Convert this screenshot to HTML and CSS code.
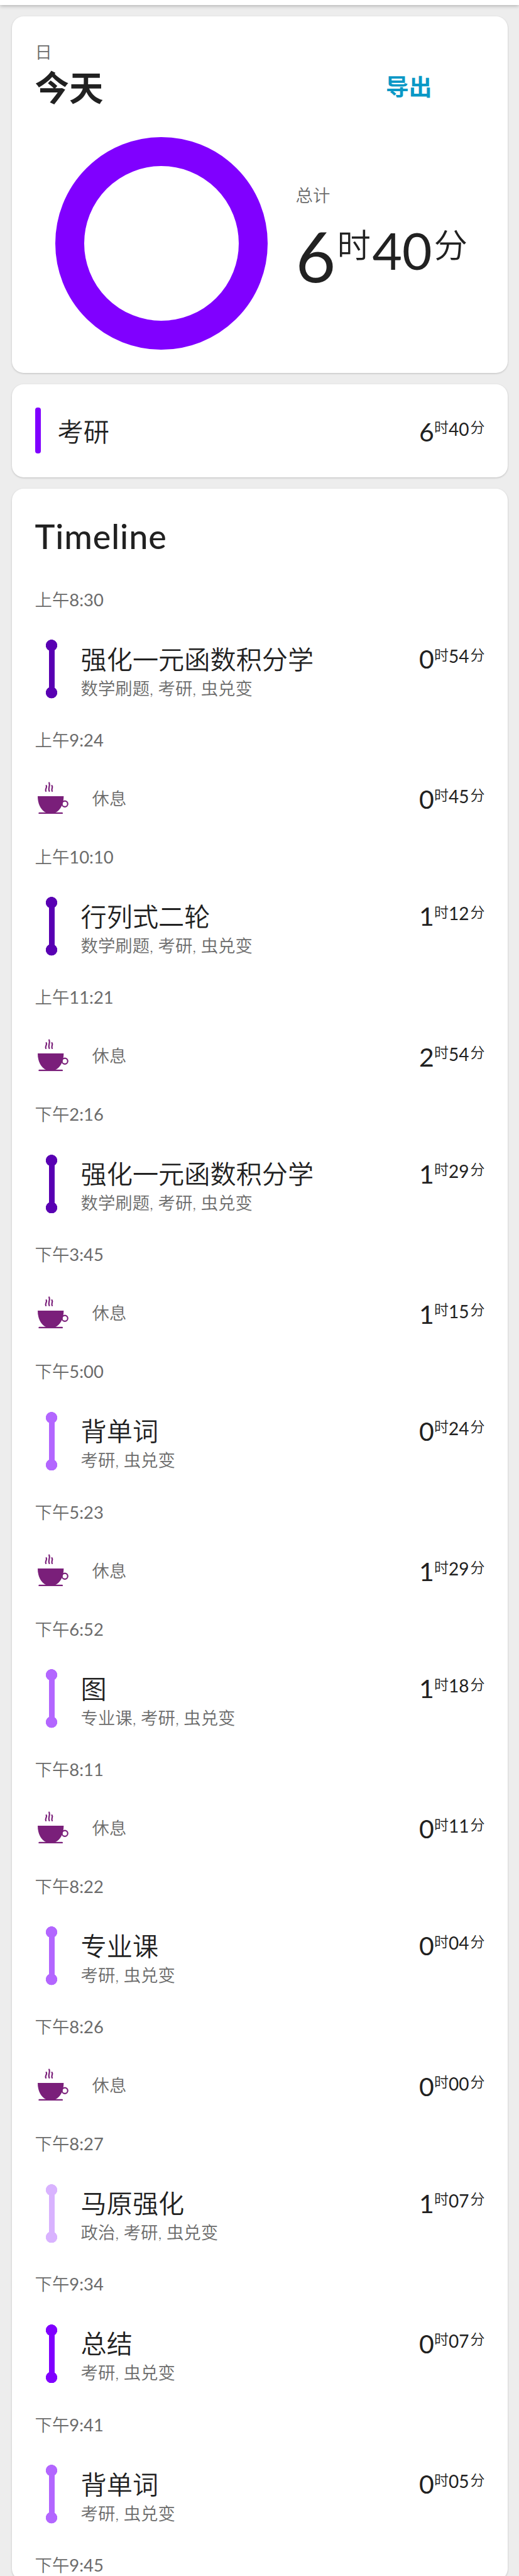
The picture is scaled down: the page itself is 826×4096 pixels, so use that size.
FILE: index.html
```html
<!DOCTYPE html>
<html lang="zh-CN">
<head>
<meta charset="utf-8">
<title>今天</title>
<link rel="stylesheet" href="styles.css">
</head>
<body>
<svg class="defs" width="0" height="0" aria-hidden="true">
  <symbol id="cup" viewBox="0 0 64 67">
    <path d="M0 30H54C54 48 46 60 37 64H17C8 60 0 48 0 30Z" fill="currentColor"/>
    <circle cx="56.4" cy="46" r="6" fill="none" stroke="currentColor" stroke-width="2.8"/>
    <path d="M3.300 65.300H50.700" stroke="currentColor" stroke-width="3.2" stroke-linecap="round"/>
    <path d="M17.800 8C20.500 12 14.500 15 17 19.500M23.800 2C26.500 9 21 12 24 19.500M29.500 8C32.500 12 27.500 15 30 19.500" fill="none" stroke="currentColor" stroke-width="2.900" stroke-linecap="round"/>
  </symbol>
</svg>
<div class="appbar"></div>
<main class="page">
  <section class="card summary">
    <p class="caption">日</p>
    <div class="heading">
      <h1>今天</h1>
      <a class="export">导出</a>
    </div>
    <div class="overview">
      <div class="ring"></div>
      <div class="total">
        <p class="caption">总计</p>
        <div class="duration large"><b>6</b><i>时</i><em>40</em><i>分</i></div>
      </div>
    </div>
  </section>

  <section class="card category">
    <span class="bar"></span>
    <span class="name">考研</span>
    <div class="duration"><b>6</b><i>时</i><em>40</em><i>分</i></div>
  </section>

  <section class="card timeline">
    <h2>Timeline</h2>
    <div class="entry task deep">
      <time>上午8:30</time><span class="rod"></span>
      <div class="info"><h3>强化一元函数积分学</h3><p>数学刷题, 考研, 虫兑变</p></div>
      <div class="duration"><b>0</b><i>时</i><em>54</em><i>分</i></div>
    </div>
    <div class="entry rest">
      <time>上午9:24</time><svg class="cup"><use href="#cup"/></svg><p class="pause">休息</p>
      <div class="duration"><b>0</b><i>时</i><em>45</em><i>分</i></div>
    </div>
    <div class="entry task deep">
      <time>上午10:10</time><span class="rod"></span>
      <div class="info"><h3>行列式二轮</h3><p>数学刷题, 考研, 虫兑变</p></div>
      <div class="duration"><b>1</b><i>时</i><em>12</em><i>分</i></div>
    </div>
    <div class="entry rest">
      <time>上午11:21</time><svg class="cup"><use href="#cup"/></svg><p class="pause">休息</p>
      <div class="duration"><b>2</b><i>时</i><em>54</em><i>分</i></div>
    </div>
    <div class="entry task deep">
      <time>下午2:16</time><span class="rod"></span>
      <div class="info"><h3>强化一元函数积分学</h3><p>数学刷题, 考研, 虫兑变</p></div>
      <div class="duration"><b>1</b><i>时</i><em>29</em><i>分</i></div>
    </div>
    <div class="entry rest">
      <time>下午3:45</time><svg class="cup"><use href="#cup"/></svg><p class="pause">休息</p>
      <div class="duration"><b>1</b><i>时</i><em>15</em><i>分</i></div>
    </div>
    <div class="entry task light">
      <time>下午5:00</time><span class="rod"></span>
      <div class="info"><h3>背单词</h3><p>考研, 虫兑变</p></div>
      <div class="duration"><b>0</b><i>时</i><em>24</em><i>分</i></div>
    </div>
    <div class="entry rest">
      <time>下午5:23</time><svg class="cup"><use href="#cup"/></svg><p class="pause">休息</p>
      <div class="duration"><b>1</b><i>时</i><em>29</em><i>分</i></div>
    </div>
    <div class="entry task light">
      <time>下午6:52</time><span class="rod"></span>
      <div class="info"><h3>图</h3><p>专业课, 考研, 虫兑变</p></div>
      <div class="duration"><b>1</b><i>时</i><em>18</em><i>分</i></div>
    </div>
    <div class="entry rest">
      <time>下午8:11</time><svg class="cup"><use href="#cup"/></svg><p class="pause">休息</p>
      <div class="duration"><b>0</b><i>时</i><em>11</em><i>分</i></div>
    </div>
    <div class="entry task light">
      <time>下午8:22</time><span class="rod"></span>
      <div class="info"><h3>专业课</h3><p>考研, 虫兑变</p></div>
      <div class="duration"><b>0</b><i>时</i><em>04</em><i>分</i></div>
    </div>
    <div class="entry rest">
      <time>下午8:26</time><svg class="cup"><use href="#cup"/></svg><p class="pause">休息</p>
      <div class="duration"><b>0</b><i>时</i><em>00</em><i>分</i></div>
    </div>
    <div class="entry task pale">
      <time>下午8:27</time><span class="rod"></span>
      <div class="info"><h3>马原强化</h3><p>政治, 考研, 虫兑变</p></div>
      <div class="duration"><b>1</b><i>时</i><em>07</em><i>分</i></div>
    </div>
    <div class="entry task vivid">
      <time>下午9:34</time><span class="rod"></span>
      <div class="info"><h3>总结</h3><p>考研, 虫兑变</p></div>
      <div class="duration"><b>0</b><i>时</i><em>07</em><i>分</i></div>
    </div>
    <div class="entry task light">
      <time>下午9:41</time><span class="rod"></span>
      <div class="info"><h3>背单词</h3><p>考研, 虫兑变</p></div>
      <div class="duration"><b>0</b><i>时</i><em>05</em><i>分</i></div>
    </div>
    <div class="entry last"><time>下午9:45</time></div>
  </section>
</main>
</body>
</html>
```

FILE: styles.css
```css
* { box-sizing: border-box; margin: 0; padding: 0; }
html, body { height: 4096px; overflow: hidden; }
body {
  background: #ededed;
  color: #212121;
  font-family: Lato, "Noto Sans CJK SC DemiLight", "Noto Sans CJK SC", sans-serif;
  font-weight: 400;
}
.defs { display: block; }
.appbar { height: 7.5px; background: #fff; box-shadow: 0 1px 6px rgba(0, 0, 0, .3); }
.page { display: flex; flex-direction: column; gap: 18px; padding: 18px 18.500px 0; }
.card { background: #fff; border-radius: 18.500px; box-shadow: 0 1px 3px rgba(0, 0, 0, .2); padding: 0 37px; flex: none; }
.caption { font-size: 27.400px; line-height: 40px; font-weight: 350; color: #6b6b6b; }

.summary { height: 567px; padding-top: 37px; }
.heading { display: flex; justify-content: space-between; align-items: center; height: 74px; }
.heading h1 { font-family: "Noto Sans CJK SC", sans-serif; font-size: 54.500px; line-height: 74px; font-weight: 700; margin-bottom: 6px; }
.export { font-family: "Noto Sans CJK SC", sans-serif; font-size: 36.700px; font-weight: 700; line-height: 50px; color: #0a98c6; margin: 0 83px 7px 0; }
.overview { display: flex; padding: 41px 0 0 32px; gap: 45px; }
.ring { width: 338px; height: 338px; border: 46px solid #8000ff; border-radius: 50%; }
.total { padding-top: 73.500px; }

.duration {
  display: grid;
  grid-template-columns: 24px 23px 34.500px 22px;
  height: 42px;
  line-height: 1;
  white-space: nowrap;
}
.duration > * { font-style: normal; font-weight: 400; }
.duration b { font-size: 41px; }
.duration i { font-size: 23px; line-height: 24px; margin-top: 1.500px; font-weight: 350; }
.duration em { font-size: 28px; margin-top: 2px; }
.duration.large { grid-template-columns: 66px 56px 98px 56px; margin-top: 20px; height: 112px; }
.duration.large b { font-size: 110px; }
.duration.large i { font-size: 53.500px; line-height: 55px; margin-top: 11px; }
.duration.large em { font-size: 82px; margin-top: 4.500px; }

.category { height: 148px; display: flex; align-items: center; }
.category .duration { margin-top: 4px; }
.bar { width: 9px; height: 73px; border-radius: 4px; background: #8000ff; }
.name { font-size: 41.200px; font-weight: 350; line-height: 56px; margin: 2px 0 0 27px; flex: 1; }

.timeline { height: 3326px; padding-top: 37px; }
.timeline h2 { font-size: 54px; line-height: 78px; font-weight: 500; height: 120.100px; letter-spacing: .9px; }
.entry { display: grid; align-content: start; grid-template-rows: 40px 1fr; }
.entry time { grid-column: 1 / -1; font-size: 27.400px; line-height: 40px; color: #6b6b6b; }
.entry .duration { margin-top: 53.500px; }
.task { height: 223.400px; grid-template-columns: 73px 1fr auto; }
.rest { height: 185.850px; grid-template-columns: 91px 1fr auto; }
.info { padding-top: 46px; }
.info h3 { font-size: 41.200px; font-weight: 350; line-height: 56px; }
.info p { font-size: 27.400px; font-weight: 350; line-height: 38px; color: #6b6b6b; }
.pause { font-size: 27.400px; font-weight: 350; line-height: 38px; padding-top: 54px; color: #6b6b6b; }
.rod {
  width: 18.400px;
  height: 93.500px;
  margin: 43.500px 0 0 17.500px;
  background:
    radial-gradient(circle at 50% 9.200px, currentColor 8.800px, transparent 9.400px),
    radial-gradient(circle at 50% 84.300px, currentColor 8.800px, transparent 9.400px),
    linear-gradient(currentColor, currentColor) 50% 50% / 9.200px 76px no-repeat;
}
.deep .rod { color: #5900b3; }
.vivid .rod { color: #8000ff; }
.light .rod { color: #b366ff; }
.pale .rod { color: #d9b3ff; }
.cup { width: 49px; height: 51.300px; margin: 46px 0 0 4px; color: #7a1f7a; }
```
